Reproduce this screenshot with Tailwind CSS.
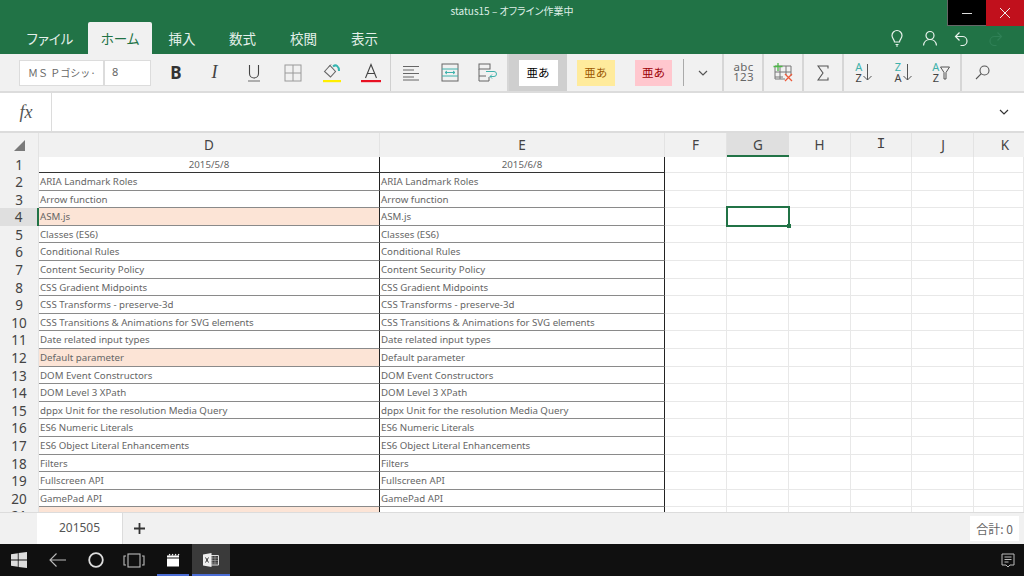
<!DOCTYPE html>
<html lang="ja">
<head>
  <meta charset="UTF-8">
  <title>status15</title>
  <script src="https://cdn.jsdelivr.net/npm/@tailwindcss/browser@4"></script>
</head>
<body class="w-[1024px] h-[576px] overflow-hidden bg-white font-['Noto_Sans_CJK_JP','Noto_Sans',sans-serif]">
  <div class="flex flex-col h-[576px]">

    <!-- title bar + tabs -->
    <div class="h-[54px] bg-[#217346] flex flex-col text-white shrink-0">
      <div class="h-[22px] flex">
        <div class="w-[947px] pl-[77px] text-center text-[10px] leading-[22px] text-[#dfeee6] [font-feature-settings:'palt']">status15 – オフライン作業中</div>
        <div class="w-[39px] h-[26px] bg-black border-l border-b border-[#666] flex items-center justify-center z-10">
          <svg width="12" height="12" viewBox="0 0 12 12"><path d="M1 6.500h10" stroke="#ddd" stroke-width="1"/></svg>
        </div>
        <div class="w-[38px] h-[26px] bg-[#c1101c] flex items-center justify-center z-10">
          <svg width="12" height="12" viewBox="0 0 12 12"><path d="M1 1l10 10M11 1L1 11" stroke="#eee" stroke-width="1"/></svg>
        </div>
      </div>
      <div class="h-[32px] flex items-stretch text-[13.5px] text-[#e4f0ea] [font-feature-settings:'palt']">
        <div class="w-[88px] flex items-center justify-center pl-[12px]">ファイル</div>
        <div class="w-[64px] flex items-center justify-center bg-[#f1f1f1] text-[#217346] rounded-t-[2px]">ホーム</div>
        <div class="w-[60px] flex items-center justify-center">挿入</div>
        <div class="w-[61px] flex items-center justify-center">数式</div>
        <div class="w-[61px] flex items-center justify-center">校閲</div>
        <div class="w-[61px] flex items-center justify-center">表示</div>
        <div class="flex-1 flex items-center justify-end">
          <svg class="mr-[17px]" width="16" height="18" viewBox="0 0 16 18" fill="none" stroke="#e8f2ec" stroke-width="1.200"><path d="M5.500 13c0-2.500-2.500-3.500-2.500-6.500a5 5 0 0 1 10 0c0 3-2.500 4-2.500 6.500z"/><path d="M6.500 15.500h3M7 17h2"/></svg>
          <svg class="mr-[16px]" width="16" height="16" viewBox="0 0 16 16" fill="none" stroke="#e8f2ec" stroke-width="1.200"><circle cx="8" cy="5.500" r="4"/><path d="M1.500 15.500c.5-4 3-6 6.500-6s6 2 6.500 6"/></svg>
          <svg class="mr-[19px]" width="15" height="15" viewBox="0 0 15 15" fill="none" stroke="#e8f2ec" stroke-width="1.200"><path d="M5.500 1.500L1.500 5.500l4 4M1.500 5.500h7a4.500 4.500 0 0 1 0 9h-2"/></svg>
          <svg class="mr-[21px]" width="15" height="15" viewBox="0 0 15 15" fill="none" stroke="#2f8056" stroke-width="1.200"><path d="M9.500 1.500l4 4-4 4M13.500 5.500h-7a4.500 4.500 0 0 0 0 9h2"/></svg>
        </div>
      </div>
    </div>

    <!-- ribbon -->
    <div class="h-[39px] bg-[#f1f1f1] border-b-2 border-[#dcdcdc] flex shrink-0 text-[#444]">
      <div class="w-[391px] flex items-center pl-[19px] border-r border-[#d0d0d0]">
        <div class="w-[132px] h-[26px] bg-white border border-[#dcdcdc] flex text-[10px] text-[#666] items-center">
          <div class="w-[85px] h-full border-r-2 border-[#dcdcdc] pl-[8px] leading-[23px] overflow-hidden whitespace-nowrap">ＭＳ Ｐゴシッ·</div>
          <div class="pl-[7px] font-['Noto_Sans'] text-[11px]">8</div>
        </div>
        <div class="w-[50px] text-center font-['Noto_Sans'] font-bold text-[17px] text-[#333]">B</div>
        <div class="w-[27px] text-center font-['Liberation_Serif'] italic text-[18px] text-[#444]">I</div>
        <div class="w-[52px] flex justify-center">
          <svg width="14" height="18" viewBox="0 0 14 18" fill="none" stroke="#444" stroke-width="1.100"><path d="M2.500 1v8.500a4.500 4.500 0 0 0 9 0V1"/><path d="M1 17h12" stroke="#777"/></svg>
        </div>
        <div class="w-[26px] flex justify-center">
          <svg width="18" height="18" viewBox="0 0 18 18" fill="none" stroke="#9a9a9a" stroke-width="1"><rect x="1" y="1" width="16" height="16"/><path d="M9 1v16M1 9h16"/></svg>
        </div>
        <div class="w-[52px] flex justify-center">
          <svg width="20" height="20" viewBox="0 0 20 20" fill="none"><path d="M2.500 8.500L8 2.500l5.500 6-5 5.500z" stroke="#666" stroke-width="1.100"/><path d="M9 1.500l-2 2" stroke="#666"/><path d="M11 3.500c3-2.500 6-.5 6 4.500" stroke="#35b5b0" stroke-width="2"/><rect x="1" y="17" width="18" height="2.200" fill="#ffee00"/></svg>
        </div>
        <div class="w-[26px] flex justify-center">
          <svg width="20" height="20" viewBox="0 0 20 20" fill="none"><path d="M4.500 15L10 1.500 15.500 15M6.300 10.500h7.400" stroke="#444" stroke-width="1.100"/><rect x="0" y="17" width="20" height="2.200" fill="#e81123"/></svg>
        </div>
      </div>
      <div class="w-[118px] flex items-center border-r-2 border-[#d6d6d6]">
        <div class="w-[39px] flex justify-center">
          <svg width="18" height="16" viewBox="0 0 18 16" stroke="#666" stroke-width="1"><path d="M1 1.500h16M1 5h11M1 8.500h16M1 12h11M1 15h16"/></svg>
        </div>
        <div class="w-[39px] flex justify-center">
          <svg width="18" height="19" viewBox="0 0 18 19" fill="none" stroke="#666"><rect x="1" y="1" width="16" height="17"/><path d="M1 6h16M1 13h16" stroke="#3fb2ac"/><path d="M4 9.500h10M4 9.500l2-1.500M4 9.500l2 1.500M14 9.500l-2-1.500M14 9.500l-2 1.500" stroke="#3fb2ac"/></svg>
        </div>
        <div class="w-[38px] flex justify-center">
          <svg width="20" height="19" viewBox="0 0 20 19" fill="none" stroke="#666"><rect x="1" y="1" width="11" height="5"/><path d="M1 6v12h10v-4M1 13h7"/><path d="M8 8.500h8a2.500 2.500 0 0 1 0 5h-4m2-2l-2 2 2 2" stroke="#3fb2ac"/></svg>
        </div>
      </div>
      <div class="w-[58px] bg-[#cfcfcf] flex items-center justify-center">
        <div class="w-[39px] h-[26px] bg-white text-[11.5px] text-black flex items-center justify-center">亜あ</div>
      </div>
      <div class="w-[157px] flex items-center border-r-2 border-[#d6d6d6]">
        <div class="ml-[10px] w-[38px] h-[26px] bg-[#ffeb9c] text-[11.5px] text-[#9c5700] flex items-center justify-center">亜あ</div>
        <div class="ml-[20px] w-[38px] h-[26px] bg-[#ffc7ce] text-[11.5px] text-[#9c0006] flex items-center justify-center">亜あ</div>
        <div class="ml-[11px] h-[27px] w-px bg-[#aaa]"></div>
        <div class="w-[38px] flex justify-center">
          <svg width="10" height="6" viewBox="0 0 10 6" fill="none" stroke="#555" stroke-width="1.200"><path d="M1 1l4 4 4-4"/></svg>
        </div>
      </div>
      <div class="w-[40px] flex flex-col items-center justify-center border-r-2 border-[#d6d6d6] text-[#666] font-['Noto_Sans'] text-[11.5px] leading-[10.5px] tracking-[0.3px] pb-[1px] pl-[1px]">
        <div>abc</div><div>123</div>
      </div>
      <div class="w-[40px] flex items-center justify-center border-r-2 border-[#d6d6d6]">
        <svg width="21" height="19" viewBox="0 0 21 19" fill="none"><path d="M2 3h16v10M2 3v13h10M2 9h16M2 14h8M7 3v13M13 3v9" stroke="#777"/><path d="M0.500 3.500h9M5 0v8" stroke="#4db848" stroke-width="1.300"/><path d="M12 11l7 7M19 11l-7 7" stroke="#ee5a3a" stroke-width="1.300"/></svg>
      </div>
      <div class="w-[40px] flex items-center justify-center border-r-2 border-[#d6d6d6]">
        <svg width="12" height="16" viewBox="0 0 12 16" fill="none" stroke="#555" stroke-width="1.100"><path d="M11 3.500V1H1l5 7-5 7h10v-2.500"/></svg>
      </div>
      <div class="w-[118px] flex items-center border-r-2 border-[#d6d6d6] font-['Noto_Sans'] text-[11px] leading-[10.5px] text-center">
        <div class="w-[40px] flex items-center justify-center gap-[1px]">
          <div><div class="text-[#3fb2ac]">A</div><div>Z</div></div>
          <svg width="9" height="17" viewBox="0 0 9 17" fill="none" stroke="#555"><path d="M4.500 0v16M.5 12l4 4 4-4"/></svg>
        </div>
        <div class="w-[40px] flex items-center justify-center gap-[1px]">
          <div><div class="text-[#3fb2ac]">Z</div><div>A</div></div>
          <svg width="9" height="17" viewBox="0 0 9 17" fill="none" stroke="#555"><path d="M4.500 0v16M.5 12l4 4 4-4"/></svg>
        </div>
        <div class="w-[38px] flex items-center justify-center gap-[1px]">
          <div><div class="text-[#3fb2ac]">A</div><div>Z</div></div>
          <svg width="10" height="14" viewBox="0 0 10 14" fill="none" stroke="#555"><path d="M.5 1h9L6 6.500V13H4V6.500z"/></svg>
        </div>
      </div>
      <div class="w-[40px] flex items-center justify-center">
        <svg width="15" height="15" viewBox="0 0 15 15" fill="none" stroke="#555" stroke-width="1.100"><circle cx="9.500" cy="5.500" r="4.500"/><path d="M6.300 8.700L1 14"/></svg>
      </div>
    </div>

    <!-- formula bar -->
    <div class="h-[40px] bg-white border-b-2 border-[#dcdcdc] flex shrink-0">
      <div class="w-[52px] border-r border-[#dcdcdc] flex items-center justify-center font-['Liberation_Serif'] italic text-[18px] text-[#555] pl-[1px]">fx</div>
      <div class="flex-1 flex items-center justify-end pr-[15px]">
        <svg width="10" height="6" viewBox="0 0 10 6" fill="none" stroke="#333" stroke-width="1.200"><path d="M1 1l4 4 4-4"/></svg>
      </div>
    </div>

    <!-- sheet -->
    <div id="sheet" class="relative h-[379px] overflow-hidden shrink-0 bg-white">
      <div class="flex h-[24px] bg-[#f1f1f1] text-[#444] text-[13.5px] font-['Noto_Sans']">
        <div class="w-[39px] border-r border-[#e3e3e3] flex items-center justify-center">
          <svg width="11" height="11" viewBox="0 0 11 11"><path d="M11 0v11H0z" fill="#7a7a7a"/></svg>
        </div>
        <div class="w-[341px] border-r border-[#e3e3e3] text-center leading-[24px]">D</div>
        <div class="w-[285px] border-r border-[#e3e3e3] text-center leading-[24px]">E</div>
        <div class="w-[62px] border-r border-[#e3e3e3] text-center leading-[24px]">F</div>
        <div class="w-[62px] bg-[#dfdfdf] border-b-2 border-[#217346] text-center leading-[24px]">G</div>
        <div class="w-[62px] border-r border-[#e3e3e3] text-center leading-[24px]">H</div>
        <div class="w-[61px] border-r border-[#e3e3e3] text-center leading-[24px] font-['Liberation_Mono'] text-[15px]">I</div>
        <div class="w-[62px] border-r border-[#e3e3e3] text-center leading-[24px] pl-[1px]">J</div>
        <div class="w-[50px] text-center leading-[24px] pl-[12px]">K</div>
      </div>
      <div id="rows"></div>
      <!-- selected cell -->
      <div class="absolute left-[726px] top-[73px] w-[64px] h-[21px] border-2 border-[#217346]">
        <div class="absolute right-[-3px] bottom-[-3px] w-[4px] h-[4px] bg-[#217346]"></div>
      </div>
    </div>

    <!-- sheet tabs / status -->
    <div class="h-[32px] bg-[#f1f1f1] border-t border-[#dcdcdc] flex items-stretch shrink-0">
      <div class="w-[37px]"></div>
      <div class="w-[86px] bg-white border-r border-[#dcdcdc] flex items-center justify-center text-[12px] text-[#555] font-['Noto_Sans'] pb-[1px]">201505</div>
      <div class="w-[33px] flex items-center justify-center">
        <svg width="11" height="11" viewBox="0 0 11 11" stroke="#333" stroke-width="1.800"><path d="M5.500 0v11M0 5.500h11"/></svg>
      </div>
      <div class="flex-1 flex justify-end items-center pr-[5px]">
        <div class="w-[49px] h-[25px] bg-white flex items-center justify-center text-[12px] text-[#666]">合計: 0</div>
      </div>
    </div>

    <!-- taskbar -->
    <div class="flex-1 bg-[#101010] flex">
      <div class="w-[38px] flex items-center justify-center">
        <svg width="16" height="16" viewBox="0 0 16 16" fill="#ddd"><path d="M0 2.200l6.800-1v6.400H0zM7.600 1l8.400-1v7.600H7.600zM0 8.400h6.800v6.400l-6.800-1zM7.600 8.400H16V16l-8.400-1.100z"/></svg>
      </div>
      <div class="w-[39px] flex items-center justify-center">
        <svg width="17" height="14" viewBox="0 0 17 14" fill="none" stroke="#bbb" stroke-width="1.100"><path d="M17 7H1M7.500.5L1 7l6.500 6.500"/></svg>
      </div>
      <div class="w-[38px] flex items-center justify-center">
        <svg width="16" height="16" viewBox="0 0 16 16" fill="none" stroke="#ddd" stroke-width="1.800"><circle cx="8" cy="8" r="6.800"/></svg>
      </div>
      <div class="w-[38px] flex items-center justify-center">
        <svg width="22" height="15" viewBox="0 0 22 15" fill="none" stroke="#bbb" stroke-width="1.100"><rect x="5" y="1" width="12" height="13"/><path d="M3 3H1v9h2M19 3h2v9h-2"/></svg>
      </div>
      <div class="ml-[4px] w-[32px] border-b-2 border-[#4a6cd4] flex items-center justify-center pt-[2px]">
        <svg width="14" height="14" viewBox="0 0 14 14" fill="#fff"><rect x="1" y="5.500" width="12" height="8"/><path d="M1 2.500h12v2H1z"/><path d="M3 2.500l1-1.500M6 2.500l1-1.500M9 2.500l1-1.500M12 2.500l1-1.500" stroke="#fff" stroke-width="1.200"/></svg>
      </div>
      <div class="ml-[3px] w-[38px] bg-[#3a3a3a] border-b-2 border-[#4a6cd4] flex items-center justify-center pt-[2px]">
        <svg width="16" height="14" viewBox="0 0 16 14"><path d="M6 2.500h9.500v9.500H6z" fill="none" stroke="#ddd"/><path d="M9 3v8.500M12 3v8.500M6 5h9M6 7.500h9M6 10h9" stroke="#aaa" stroke-width=".6"/><path d="M0 1.500L8.500 0v14L0 12.500z" fill="#eee"/><path d="M2.500 4.500l3 5M5.500 4.500l-3 5" stroke="#333"/></svg>
      </div>
      <div class="flex-1 flex items-center justify-end pr-[9px]">
        <svg width="14" height="15" viewBox="0 0 14 15" fill="none" stroke="#bbb"><path d="M1 1h12v11H9l-2 2-2-2H1z"/><path d="M3.500 4h7M3.500 6.500h7M3.500 9h4"/></svg>
      </div>
    </div>
  </div>

  <script>
    // column D list, E repeats it apart from the date in row 1
    const names = [
      "2015/5/8", "ARIA Landmark Roles", "Arrow function", "ASM.js", "Classes (ES6)",
      "Conditional Rules", "Content Security Policy", "CSS Gradient Midpoints",
      "CSS Transforms - preserve-3d", "CSS Transitions & Animations for SVG elements",
      "Date related input types", "Default parameter", "DOM Event Constructors",
      "DOM Level 3 XPath", "dppx Unit for the resolution Media Query", "ES6 Numeric Literals",
      "ES6 Object Literal Enhancements", "Filters", "Fullscreen API", "GamePad API", ""
    ];
    const peach = [4, 12, 21];
    const blankCols = ['w-[62px]', 'w-[62px]', 'w-[62px]', 'w-[61px]', 'w-[62px]', 'w-[50px]'];

    let html = '';
    names.forEach((name, i) => {
      const n = i + 1;
      const isFirst = n === 1;
      const height = isFirst ? 'h-[16px] leading-[16px]' : 'h-[17.6px] leading-[18px]';
      const dark = isFirst ? 'border-b-[#333]' : 'border-b-[#8a8a8a]';
      const fill = peach.includes(n) ? 'bg-[#fce4d6]' : 'bg-white';
      const head = n === 4 ? 'bg-[#dfdfdf] border-r-2 border-r-[#217346]' : 'bg-[#f1f1f1] border-r border-r-[#e3e3e3]';
      const align = isFirst ? 'text-center' : 'pl-[1px]';
      const e = isFirst ? '2015/6/8' : name;
      html += `<div class="flex ${height} font-['Noto_Sans'] text-[9.7px] text-[#666] whitespace-nowrap">
        <div class="w-[39px] ${head} text-center text-[13.5px] text-[#444]">${n}</div>
        <div class="w-[341px] ${fill} ${align} border-b ${dark} border-r border-r-[#222] overflow-hidden">${name.replace('&', '&amp;')}</div>
        <div class="w-[285px] bg-white ${align} border-b ${dark} border-r border-r-[#222] overflow-hidden">${e.replace('&', '&amp;')}</div>
        ${blankCols.map(w => `<div class="${w} border-b border-r border-[#e8e8e8]"></div>`).join('')}
      </div>`;
    });
    document.getElementById('rows').innerHTML = html;
  </script>
</body>
</html>
